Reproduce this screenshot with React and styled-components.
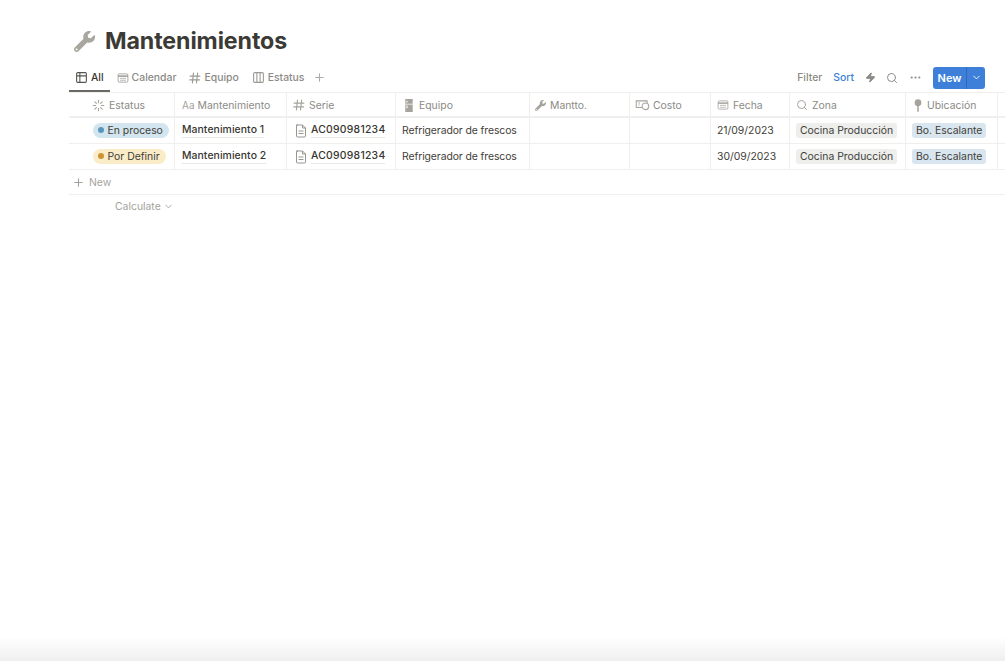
import React from 'react';
import styled, { createGlobalStyle } from 'styled-components';
import { FaWrench } from 'react-icons/fa';
import { LuTable2, LuColumns3, LuPlus, LuSearch, LuChevronDown, LuEllipsis, LuZap } from 'react-icons/lu';

const GlobalStyle = createGlobalStyle`
    html, body { margin: 0; padding: 0; background: #fff; }
    body { font-family: Inter, "Liberation Sans", sans-serif; color: #37352f; overflow: hidden; }
`;

const COLUMNS = '106px 112px 109px 134px 100px 81px 79px 116px 92px 1fr';
const LINE = '#f0efed';

const Page = styled.div`
    height: 661px;
    display: flex;
    flex-direction: column;
    overflow: hidden;
`;

const Content = styled.div`
    flex: 1;
    padding-left: 69px;
`;

const TitleRow = styled.div`
    display: flex;
    align-items: center;
    gap: 10px;
    height: 26px;
    padding: 28px 0 0 5px;
`;

const TitleIcon = styled.span`
    display: flex;
    color: #a8a69f;
    font-size: 21px;
`;

const Title = styled.h1`
    margin: 0;
    font-size: 23.2px;
    font-weight: 700;
    letter-spacing: -0.1px;
    color: #3b3a35;
`;

const Toolbar = styled.div`
    height: 38px;
    display: flex;
    justify-content: space-between;
    align-items: flex-end;
`;

const Tabs = styled.div`
    display: flex;
    align-items: center;
    height: 29px;
`;

const Tab = styled.div`
    height: 100%;
    box-sizing: border-box;
    display: flex;
    align-items: center;
    gap: 3px;
    padding: 2px 6px 0;
    margin-right: 1px;
    font-size: 10.4px;
    font-weight: 500;
    color: ${p => (p.$active ? '#37352f' : '#8b8a85')};
    border-bottom: 2px solid ${p => (p.$active ? '#6a6964' : 'transparent')};
    svg { color: ${p => (p.$active ? '#55534e' : '#9b9a97')}; flex: none; }
`;

const AddTab = styled.div`
    display: flex;
    padding-left: 2px;
    color: #adaca8;
`;

const Actions = styled.div`
    display: flex;
    align-items: center;
    height: 29px;
    padding-right: 20px;
    font-size: 10.4px;
    font-weight: 500;
    color: #8b8a85;
`;

const ActionText = styled.span`
    color: ${p => (p.$blue ? '#3b82d6' : '#8b8a85')};
    margin-right: ${p => p.$gap}px;
`;

const ActionIcon = styled.span`
    display: flex;
    margin-right: ${p => p.$gap}px;
    color: #8b8a85;
`;

const NewButton = styled.div`
    display: flex;
    align-items: center;
    width: 52px;
    height: 22px;
    background: #3d7fd9;
    border-radius: 3px;
    color: #fff;
    font-weight: 600;
    font-size: 11px;
`;

const NewLabel = styled.span`
    flex: 1;
    text-align: center;
    line-height: 22px;
    border-right: 1px solid #3069b8;
`;

const NewCaret = styled.span`
    display: flex;
    width: 18px;
    justify-content: center;
`;

const Row = styled.div`
    display: grid;
    grid-template-columns: ${COLUMNS};
    height: ${p => p.$height}px;
    border-bottom: 1px solid ${LINE};
    box-sizing: border-box;
`;

const HeadRow = styled(Row)`
    border-top: 1px solid ${LINE};
    border-bottom-width: 2px;
`;

const Cell = styled.div`
    display: flex;
    align-items: center;
    min-width: 0;
    white-space: nowrap;
    box-sizing: border-box;
    padding: 0 ${p => p.$pad ?? 6}px 1px;
    border-right: 1px solid ${p => (p.$last ? 'transparent' : LINE)};
    font-size: 10.4px;
    color: #3f3e39;
`;

const HeadCell = styled(Cell)`
    color: #8b8a85;
    gap: ${p => p.$gap ?? 4}px;
    padding: 1px 0 0 ${p => p.$left ?? 5}px;
    svg { flex: none; color: #a5a39c; }
`;

const Aa = styled.span`
    font-size: 10px;
    color: #a5a39c;
`;

const Status = styled.span`
    display: inline-flex;
    align-items: center;
    gap: 3.5px;
    height: 15px;
    margin-left: 24px;
    padding: 0 6px 0 5px;
    border-radius: 8px;
    color: #3f3e39;
    background: ${p => p.$bg};
`;

const Dot = styled.i`
    width: 6px;
    height: 6px;
    border-radius: 50%;
    background: ${p => p.$color};
`;

const Name = styled.span`
    font-weight: 500;
    color: #37352f;
    border-bottom: 1px solid #e9e8e5;
    line-height: 14px;
    letter-spacing: 0.08px;
`;

const SerieName = styled(Name)`
    margin-left: 4px;
    letter-spacing: 0.25px;
`;

const Equipment = styled.span`
    letter-spacing: -0.09px;
`;

const PageIcon = styled.span`
    display: flex;
    margin-left: 1px;
    color: #8b8a85;
    position: relative;
    top: 1px;
`;

const Tag = styled.span`
    display: inline-flex;
    align-items: center;
    height: 15px;
    padding: 0 4px;
    border-radius: 3px;
    background: ${p => p.$bg};
`;

const AddRow = styled.div`
    display: flex;
    align-items: center;
    gap: 4px;
    height: 24px;
    padding-left: 3px;
    border-bottom: 1px solid ${LINE};
    font-size: 10.4px;
    color: #a5a39c;
`;

const Calculate = styled.div`
    display: flex;
    align-items: center;
    gap: 2px;
    height: 22px;
    padding-left: 46px;
    font-size: 10.4px;
    color: #a5a39c;
`;

const BottomShade = styled.div`
    height: 24px;
    background: linear-gradient(to bottom, #ffffff, #efefef);
`;

const Spinner = () => (
    <svg width="13" height="13" viewBox="0 0 16 16" stroke="currentColor" strokeWidth="1.3" strokeLinecap="round">
        <path d="M8 1.5v3M8 11.5v3M1.5 8h3M11.5 8h3M3.4 3.4l2.1 2.1M10.5 10.5l2.1 2.1M3.4 12.6l2.1-2.1M10.5 5.5l2.1-2.1" />
    </svg>
);

const Hash = ({ size = 12 }) => (
    <svg width={size} height={size} viewBox="0 0 16 16" stroke="currentColor" strokeWidth="1.5" strokeLinecap="round" fill="none">
        <path d="M6 1.5 4.5 14.5M11.5 1.5 10 14.5M1.5 5.5h13M1 10.5h13" />
    </svg>
);

const CalendarIcon = ({ size = 12 }) => (
    <svg width={size} height={size} viewBox="0 0 16 16" fill="none" stroke="currentColor" strokeWidth="1.1">
        <rect x="1.5" y="2.5" width="13" height="11" rx="1.5" />
        <path d="M1.5 5.5h13" strokeWidth="2" />
        <path d="M4 8.5h8M4 11h8" strokeWidth="0.9" />
    </svg>
);

const Fridge = () => (
    <svg width="12" height="13" viewBox="0 0 12 14" fill="currentColor">
        <path d="M2 0h8v5H2zM2 6h8v8H2z" />
        <path d="M3.2 1.8h1.2v2H3.2zM3.2 7h1.2v3H3.2z" fill="#fff" />
    </svg>
);

const Money = () => (
    <svg width="15" height="12" viewBox="0 0 18 14" fill="none" stroke="currentColor" strokeWidth="1.3">
        <path d="M9 10H1.5V2h13v3" />
        <path d="M4 4.5h2M4 7h1.5" />
        <circle cx="12.5" cy="8.5" r="4" fill="#fff" />
    </svg>
);

const Pin = () => (
    <svg width="10" height="13" viewBox="0 0 10 14" fill="currentColor">
        <circle cx="5" cy="4" r="3.6" />
        <rect x="4.2" y="6" width="1.6" height="8" rx="0.8" />
    </svg>
);

const DocIcon = () => (
    <svg width="12" height="14" viewBox="0 0 12 14" fill="none" stroke="currentColor" strokeWidth="0.9">
        <path d="M1.5 1h6l3 3v8a1 1 0 0 1-1 1h-7a1 1 0 0 1-1-1V2a1 1 0 0 1 1-1z" />
        <path d="M7.5 1v3h3M3.5 7h5M3.5 9.5h5" />
    </svg>
);

const rows = [
    { status: 'En proceso', bg: '#d3e5ef', dot: '#5b97bd', name: 'Mantenimiento 1', date: '21/09/2023' },
    { status: 'Por Definir', bg: '#fbecc8', dot: '#cb9433', name: 'Mantenimiento 2', date: '30/09/2023' },
];

const App = () => (
    <Page>
        <GlobalStyle />
        <Content>
            <TitleRow>
                <TitleIcon><FaWrench /></TitleIcon>
                <Title>Mantenimientos</Title>
            </TitleRow>
            <Toolbar>
                <Tabs>
                    <Tab $active><LuTable2 size={13} />All</Tab>
                    <Tab><CalendarIcon />Calendar</Tab>
                    <Tab><Hash />Equipo</Tab>
                    <Tab><LuColumns3 size={13} />Estatus</Tab>
                    <AddTab><LuPlus size={13} /></AddTab>
                </Tabs>
                <Actions>
                    <ActionText $gap={11}>Filter</ActionText>
                    <ActionText $blue $gap={11}>Sort</ActionText>
                    <ActionIcon $gap={10}><LuZap size={11} fill="currentColor" /></ActionIcon>
                    <ActionIcon $gap={11}><LuSearch size={12} /></ActionIcon>
                    <ActionIcon $gap={11}><LuEllipsis size={13} /></ActionIcon>
                    <NewButton>
                        <NewLabel>New</NewLabel>
                        <NewCaret><LuChevronDown size={11} /></NewCaret>
                    </NewButton>
                </Actions>
            </Toolbar>
            <HeadRow $height={26}>
                <HeadCell $left={23}><Spinner />Estatus</HeadCell>
                <HeadCell $left={7} $gap={3}><Aa>Aa</Aa>Mantenimiento</HeadCell>
                <HeadCell $left={6}><Hash />Serie</HeadCell>
                <HeadCell $left={7}><Fridge />Equipo</HeadCell>
                <HeadCell><FaWrench size={11} />Mantto.</HeadCell>
                <HeadCell $left={5} $gap={3}><Money />Costo</HeadCell>
                <HeadCell $left={6}><CalendarIcon />Fecha</HeadCell>
                <HeadCell $left={6}><LuSearch size={12} />Zona</HeadCell>
                <HeadCell $left={7}><Pin />Ubicación</HeadCell>
                <HeadCell $last />
            </HeadRow>
            {rows.map(r => (
                <Row $height={26} key={r.name}>
                    <Cell $pad={0}>
                        <Status $bg={r.bg}><Dot $color={r.dot} />{r.status}</Status>
                    </Cell>
                    <Cell $pad={7}><Name>{r.name}</Name></Cell>
                    <Cell $pad={7}><PageIcon><DocIcon /></PageIcon><SerieName>AC090981234</SerieName></Cell>
                    <Cell><Equipment>Refrigerador de frescos</Equipment></Cell>
                    <Cell />
                    <Cell />
                    <Cell>{r.date}</Cell>
                    <Cell><Tag $bg="#eeeeed">Cocina Producción</Tag></Cell>
                    <Cell><Tag $bg="#d9e6ef">Bo. Escalante</Tag></Cell>
                    <Cell $last />
                </Row>
            ))}
            <AddRow><LuPlus size={13} />New</AddRow>
            <Calculate>Calculate<LuChevronDown size={11} /></Calculate>
        </Content>
        <BottomShade />
    </Page>
);

export default App;
